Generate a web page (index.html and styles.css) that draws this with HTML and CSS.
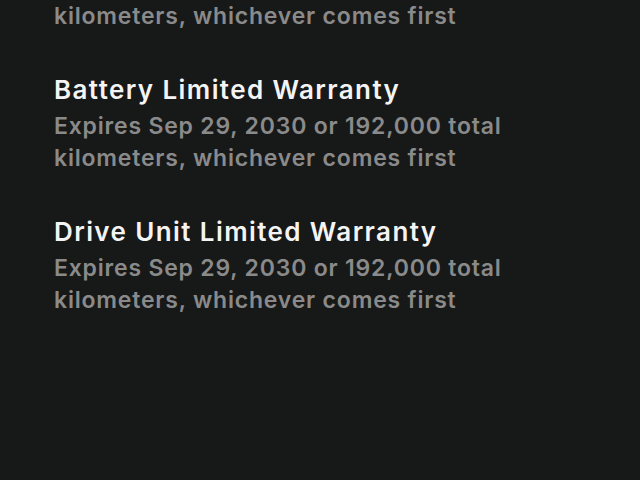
FILE: index.html
```html
<!DOCTYPE html>
<html lang="en">
<head>
    <meta charset="UTF-8">
    <meta name="viewport" content="width=device-width, initial-scale=1.0">
    <title>Warranty</title>
    <link rel="stylesheet" href="styles.css">
</head>
<body>
    <div class="warranty-list">
        <div class="warranty">
            <h3>Basic Vehicle Limited Warranty</h3>
            <p>Expires Sep 29, 2027 or 80,000 total kilometers, whichever comes first</p>
        </div>
        <div class="warranty">
            <h3>Battery Limited Warranty</h3>
            <p>Expires Sep 29, 2030 or 192,000 total kilometers, whichever comes first</p>
        </div>
        <div class="warranty">
            <h3>Drive Unit Limited Warranty</h3>
            <p>Expires Sep 29, 2030 or 192,000 total kilometers, whichever comes first</p>
        </div>
    </div>
</body>
</html>
```

FILE: styles.css
```css
body {
    margin: 0;
    padding: 0;
    background-color: #171818;
    font-family: Inter, "Open Sans", sans-serif;
    height: 480px;
    overflow: hidden;
}

.warranty-list {
    padding: 0 54px;
    margin-top: -68px;
    display: flex;
    flex-direction: column;
    gap: 42px;
}

.warranty h3 {
    margin: 0 0 4px 0;
    color: #f4f4f4;
    font-size: 26px;
    font-weight: 600;
    letter-spacing: 1.4px;
    line-height: 32px;
}

.warranty p {
    margin: 0;
    width: 470px;
    color: #8a8a8a;
    font-size: 23px;
    font-weight: 600;
    letter-spacing: 0.8px;
    line-height: 32px;
}
```
